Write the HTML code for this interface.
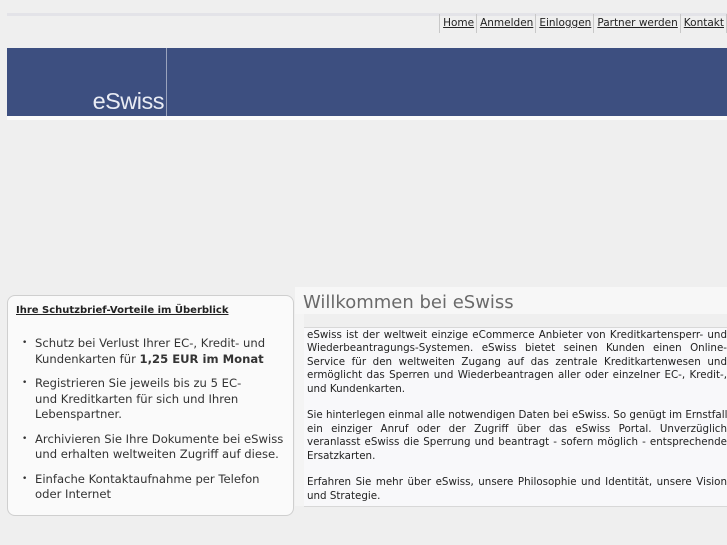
<!DOCTYPE html>
<html><head><meta charset="utf-8"><style>
body{margin:0;background:#efefef;font-family:"DejaVu Sans",sans-serif;width:727px;height:545px;overflow:hidden;position:relative}
.abs{position:absolute}
#line{left:7px;top:13px;width:720px;height:3px;background:#e3e3e8}
#nav{right:0;top:14px;height:19px;font-size:10.5px;display:flex}
#nav a{color:#222;text-decoration:underline;border-left:1px solid #c8c8c8;padding:0 2px 0 3px;line-height:19px;display:block}
#banner{left:7px;top:48px;width:720px;height:68px;background:#3d4f80}
#div{left:166px;top:48px;width:1px;height:68px;background:#9aa3bd}
#logo{right:563px;top:88px;color:#e9ecf4;font-family:"Liberation Sans",sans-serif;font-size:23.5px;letter-spacing:-0.5px}
#strip{left:7px;top:116px;width:720px;height:4px;background:#fafafa}
#lbox{left:7px;top:295px;width:287px;height:221px;background:#fafafa;border:1px solid #cfcfcf;border-radius:8px;box-sizing:border-box}
#lbox h4{margin:0;position:absolute;left:8px;top:9px;font-size:10px;text-decoration:underline;color:#222}
#lbox ul{position:absolute;left:0;top:40px;margin:0;padding:0 0 0 27px;list-style:none;font-size:11.6px;line-height:15.5px;color:#333;white-space:nowrap}
#lbox li{position:relative;margin-bottom:9px}
#lbox li:before{content:"•";position:absolute;left:-13px;font-size:9px;top:0}
#hpanel{left:295px;top:287px;width:432px;height:27px;background:#f7f7f7}
#hpanel div{position:absolute;left:8px;top:5px;font-size:18px;color:#6a6a6a}
#band{left:295px;top:314px;width:9px;height:192px;background:#f4f4f4}
#tbox{left:304px;top:327px;width:423px;height:180px;background:#f8f8fa;border-top:1px solid #d8d8d8;border-bottom:1px solid #d8d8d8;box-sizing:border-box;font-size:10.3px;line-height:13.4px;color:#222;padding:1px 0 0 3px}
#tbox .j{text-align:justify;text-align-last:justify;white-space:nowrap}
#tbox .l{white-space:nowrap}
#tbox .g{height:13.4px}
</style></head><body>
<div id="line" class="abs"></div>
<div id="nav" class="abs"><a>Home</a><a>Anmelden</a><a>Einloggen</a><a>Partner werden</a><a style="border-right:1px solid #c8c8c8">Kontakt</a></div>
<div id="banner" class="abs"></div>
<div id="div" class="abs"></div>
<div id="logo" class="abs">eSwiss</div>
<div id="strip" class="abs"></div>
<div id="lbox" class="abs">
<h4>Ihre Schutzbrief-Vorteile im Überblick</h4>
<ul>
<li>Schutz bei Verlust Ihrer EC-, Kredit- und<br>Kundenkarten für <b>1,25 EUR im Monat</b></li>
<li>Registrieren Sie jeweils bis zu 5 EC-<br>und Kreditkarten für sich und Ihren<br>Lebenspartner.</li>
<li>Archivieren Sie Ihre Dokumente bei eSwiss<br>und erhalten weltweiten Zugriff auf diese.</li>
<li>Einfache Kontaktaufnahme per Telefon<br>oder Internet</li>
</ul></div>
<div id="hpanel" class="abs"><div>Willkommen bei eSwiss</div></div>
<div id="band" class="abs"></div>
<div id="tbox" class="abs">
<div class="j">eSwiss ist der weltweit einzige eCommerce Anbieter von Kreditkartensperr- und</div>
<div class="j">Wiederbeantragungs-Systemen. eSwiss bietet seinen Kunden einen Online-</div>
<div class="j">Service für den weltweiten Zugang auf das zentrale Kreditkartenwesen und</div>
<div class="j">ermöglicht das Sperren und Wiederbeantragen aller oder einzelner EC-, Kredit-,</div>
<div class="l">und Kundenkarten.</div>
<div class="g"></div>
<div class="j">Sie hinterlegen einmal alle notwendigen Daten bei eSwiss. So genügt im Ernstfall</div>
<div class="j">ein einziger Anruf oder der Zugriff über das eSwiss Portal. Unverzüglich</div>
<div class="j">veranlasst eSwiss die Sperrung und beantragt - sofern möglich - entsprechende</div>
<div class="l">Ersatzkarten.</div>
<div class="g"></div>
<div class="j">Erfahren Sie mehr über eSwiss, unsere Philosophie und Identität, unsere Vision</div>
<div class="l">und Strategie.</div>
</div>
<div id="bot" class="abs"></div>
</body></html>
